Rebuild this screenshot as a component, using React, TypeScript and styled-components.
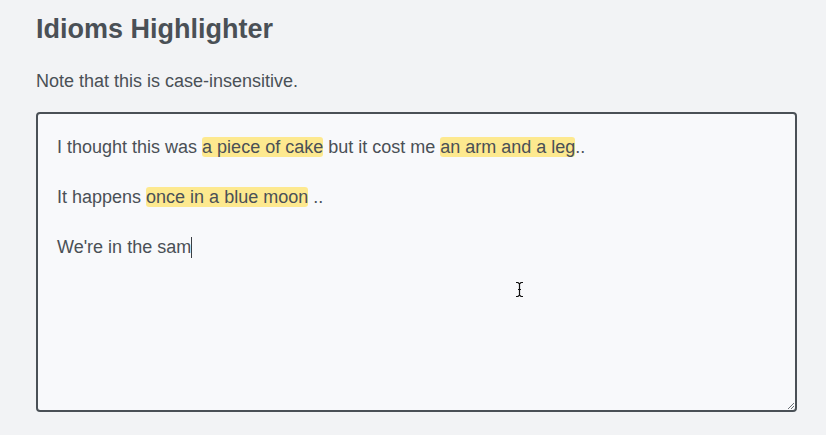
import React from "react";
import styled, { createGlobalStyle } from "styled-components";

const Global = createGlobalStyle`
  html, body { margin: 0; padding: 0; background: #f2f3f5; }
  body { font-family: "Liberation Sans", Arial, sans-serif; color: #4a5056; }
`;

const Page = styled.main`
  padding: 13px 30px 0 36px;
  font-size: 18px;
`;

const Title = styled.h1`
  margin: 0;
  font-size: 27px;
  line-height: 32px;
  font-weight: 700;
  color: #4a5056;
`;

const Note = styled.p`
  margin: 24px 0 0;
  font-size: 18px;
  line-height: 25px;
  color: #4a5056;
`;

const Editor = styled.div`
  position: relative;
  box-sizing: border-box;
  margin-top: 18px;
  width: 761px;
  height: 300px;
  border: 2px solid #4a5056;
  border-radius: 4px;
  background: #f8f9fb;
  padding: 21px 19px;
  font-size: 18px;
  line-height: 25px;
  white-space: pre-wrap;
  color: #4a5056;
`;

const Line = styled.div<{ $gap?: boolean }>`
  margin-bottom: ${(p) => (p.$gap ? "25px" : "0")};
`;

const Mark = styled.mark`
  background: #fde98f;
  color: inherit;
  border-radius: 3px;
`;

const Caret = styled.span`
  display: inline-block;
  width: 1px;
  height: 21px;
  background: #3a3f44;
  vertical-align: -5px;
`;

const Resize = styled.svg`
  position: absolute;
  right: 0;
  bottom: 0;
`;

const Pointer = styled.svg`
  position: absolute;
  left: 477px;
  top: 167px;
`;

export default function App() {
  return (
    <>
      <Global />
      <Page>
        <Title>Idioms Highlighter</Title>
        <Note>Note that this is case-insensitive.</Note>
        <Editor>
          <Line $gap>
            I thought this was <Mark>a piece of cake</Mark> but it cost me <Mark>an arm and a leg</Mark>..
          </Line>
          <Line $gap>
            It happens <Mark>once in a blue moon</Mark> ..
          </Line>
          <Line>
            We're in the sam<Caret />
          </Line>
          <Pointer width="9" height="17" viewBox="0 0 9 17">
            <path d="M1 1.5 L3 1.5 L4.5 3 L6 1.5 L8 1.5 M4.5 3 L4.5 14 M1 15.5 L3 15.5 L4.5 14 L6 15.5 L8 15.5 M3 8.5 L6 8.5" stroke="#111" strokeWidth="1.2" fill="none" />
          </Pointer>
          <Resize width="9" height="9" viewBox="0 0 9 9">
            <path d="M8 2 L2 8 M8 5 L5 8" stroke="#6b7075" strokeWidth="1" fill="none" />
          </Resize>
        </Editor>
      </Page>
    </>
  );
}
